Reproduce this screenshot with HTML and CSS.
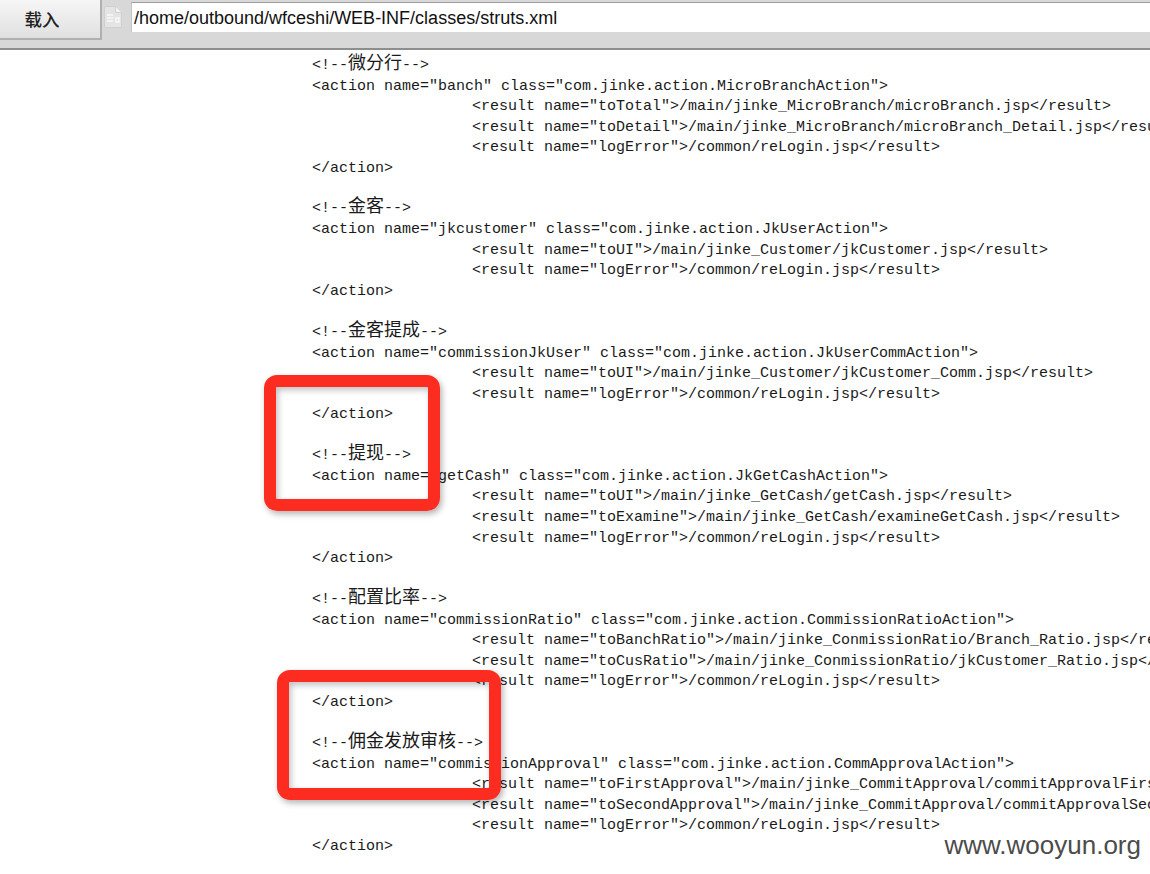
FILE: index.html
```html
<!DOCTYPE html>
<html lang="zh">
<head>
<meta charset="utf-8">
<title>struts.xml</title>
<link rel="stylesheet" href="styles.css">
</head>
<body>
<header class="toolbar">
  <button class="load-btn">载入</button>
  <svg class="file-icon" width="20" height="24" viewBox="0 0 20 24"><path d="M1.5 1.5h11l6 6v15h-17z" fill="#e4e4e4" stroke="#d0d0d0"/><path d="M12.5 1.5v6h6" fill="#f4f4f4" stroke="#d0d0d0"/><path d="M4 10h6M4 13h6M4 16h6M13 13h3v4h-3z" stroke="#f8f8f8" fill="none" stroke-width="1.4"/></svg>
  <div class="path-box">/home/outbound/wfceshi/WEB-INF/classes/struts.xml</div>
</header>
<main class="code">
<div class="line note">&lt;!--<span class="cjk">微分行</span>--&gt;</div>
<div class="line">&lt;action name="banch" class="com.jinke.action.MicroBranchAction"&gt;</div>
<div class="line sub">&lt;result name="toTotal"&gt;/main/jinke_MicroBranch/microBranch.jsp&lt;/result&gt;</div>
<div class="line sub">&lt;result name="toDetail"&gt;/main/jinke_MicroBranch/microBranch_Detail.jsp&lt;/result&gt;</div>
<div class="line sub">&lt;result name="logError"&gt;/common/reLogin.jsp&lt;/result&gt;</div>
<div class="line">&lt;/action&gt;</div>
<div class="line"></div>
<div class="line note">&lt;!--<span class="cjk">金客</span>--&gt;</div>
<div class="line">&lt;action name="jkcustomer" class="com.jinke.action.JkUserAction"&gt;</div>
<div class="line sub">&lt;result name="toUI"&gt;/main/jinke_Customer/jkCustomer.jsp&lt;/result&gt;</div>
<div class="line sub">&lt;result name="logError"&gt;/common/reLogin.jsp&lt;/result&gt;</div>
<div class="line">&lt;/action&gt;</div>
<div class="line"></div>
<div class="line note">&lt;!--<span class="cjk">金客提成</span>--&gt;</div>
<div class="line">&lt;action name="commissionJkUser" class="com.jinke.action.JkUserCommAction"&gt;</div>
<div class="line sub">&lt;result name="toUI"&gt;/main/jinke_Customer/jkCustomer_Comm.jsp&lt;/result&gt;</div>
<div class="line sub">&lt;result name="logError"&gt;/common/reLogin.jsp&lt;/result&gt;</div>
<div class="line">&lt;/action&gt;</div>
<div class="line"></div>
<div class="line note">&lt;!--<span class="cjk">提现</span>--&gt;</div>
<div class="line">&lt;action name="getCash" class="com.jinke.action.JkGetCashAction"&gt;</div>
<div class="line sub">&lt;result name="toUI"&gt;/main/jinke_GetCash/getCash.jsp&lt;/result&gt;</div>
<div class="line sub">&lt;result name="toExamine"&gt;/main/jinke_GetCash/examineGetCash.jsp&lt;/result&gt;</div>
<div class="line sub">&lt;result name="logError"&gt;/common/reLogin.jsp&lt;/result&gt;</div>
<div class="line">&lt;/action&gt;</div>
<div class="line"></div>
<div class="line note">&lt;!--<span class="cjk">配置比率</span>--&gt;</div>
<div class="line">&lt;action name="commissionRatio" class="com.jinke.action.CommissionRatioAction"&gt;</div>
<div class="line sub">&lt;result name="toBanchRatio"&gt;/main/jinke_ConmissionRatio/Branch_Ratio.jsp&lt;/result&gt;</div>
<div class="line sub">&lt;result name="toCusRatio"&gt;/main/jinke_ConmissionRatio/jkCustomer_Ratio.jsp&lt;/result&gt;</div>
<div class="line sub">&lt;result name="logError"&gt;/common/reLogin.jsp&lt;/result&gt;</div>
<div class="line">&lt;/action&gt;</div>
<div class="line"></div>
<div class="line note">&lt;!--<span class="cjk">佣金发放审核</span>--&gt;</div>
<div class="line">&lt;action name="commissionApproval" class="com.jinke.action.CommApprovalAction"&gt;</div>
<div class="line sub">&lt;result name="toFirstApproval"&gt;/main/jinke_CommitApproval/commitApprovalFirst.jsp&lt;/result&gt;</div>
<div class="line sub">&lt;result name="toSecondApproval"&gt;/main/jinke_CommitApproval/commitApprovalSecond.jsp&lt;/result&gt;</div>
<div class="line sub">&lt;result name="logError"&gt;/common/reLogin.jsp&lt;/result&gt;</div>
<div class="line">&lt;/action&gt;</div>
</main>
<div class="mark mark-one"></div>
<div class="mark mark-two"></div>
<div class="watermark">www.wooyun.org</div>
</body>
</html>
```
FILE: styles.css
```css
html, body { margin: 0; padding: 0; height: 100%; overflow: hidden; background: #fff; }
body { position: relative; }
.toolbar {
  height: 48px;
  background: #d8d8d8;
  border-bottom: 2px solid #8e8e8e;
  display: flex;
  align-items: flex-start;
}
.load-btn {
  width: 102px;
  height: 40px;
  flex: none;
  margin: 0;
  padding: 0 16px 2px 0;
  border: 0;
  border-right: 2px solid #b0b0b0;
  border-bottom: 2px solid #b0b0b0;
  background: linear-gradient(#f6f6f6, #e0e0e0);
  font: 500 17.5px "Noto Sans CJK SC", sans-serif;
  color: #222;
}
.file-icon { margin: 5px 0 0 1px; flex: none; }
.path-box {
  margin: 2px 0 0 8px;
  flex: 1;
  height: 29px;
  background: #fff;
  border-left: 1px solid #c4c4c4;
  border-top: 1px solid #9c9c9c;
  font: 18px/30px "Liberation Sans", sans-serif;
  color: #111;
  padding-left: 2px;
  white-space: nowrap;
}
.code {
  padding: 6px 0 0 312px;
  font: 15px/20.55px "Liberation Mono", "Noto Sans CJK SC", monospace;
  color: #1a1a1a;
}
.line { height: 20.55px; white-space: pre; }
.note { margin: -0.5px 0 0.5px; }
.sub { padding-left: 160px; }
.cjk { font: 400 18px/0 "Noto Sans CJK SC", sans-serif; }
.mark {
  position: absolute;
  box-sizing: border-box;
  border: 12px solid #fc2d20;
  border-radius: 13px;
  box-shadow: 2px 3px 6px rgba(0,0,0,.3), inset 2px 3px 6px rgba(0,0,0,.25);
}
.mark-one { left: 264px; top: 375px; width: 176px; height: 136px; }
.mark-two { left: 277px; top: 670px; width: 224px; height: 130px; }
.watermark {
  position: absolute;
  right: 9px;
  top: 829px;
  font: 26px/32px "Liberation Sans", sans-serif;
  color: #4c4c4c;
}
```
